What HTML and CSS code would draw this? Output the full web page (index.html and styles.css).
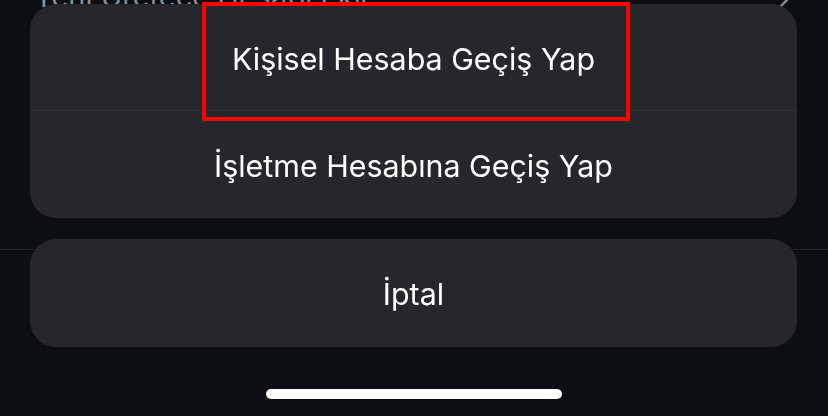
FILE: index.html
```html
<!DOCTYPE html>
<html lang="tr">
<head>
<meta charset="utf-8">
<title>Hesap Değiştir</title>
<link rel="stylesheet" href="styles.css">
</head>
<body>
<div class="backdrop">
  <div class="bg-row">
    <span class="bg-title">Yeni Üretece Hesabı Ekle</span>
    <svg class="bg-chevron" width="14" height="24" viewBox="0 0 14 24"><path d="M2 2 L12 12 L2 22" fill="none" stroke="#8b8e94" stroke-width="2.4" stroke-linecap="round" stroke-linejoin="round"/></svg>
  </div>
  <div class="bg-spacer"></div>
  <div class="bg-line"></div>
</div>

<div class="sheet">
  <div class="group">
    <div class="action first">
      <span>Kişisel Hesaba Geçiş Yap</span>
      <div class="highlight"></div>
    </div>
    <div class="divider"></div>
    <div class="action">
      <span>İşletme Hesabına Geçiş Yap</span>
    </div>
  </div>
  <div class="group cancel">
    <div class="action">
      <span>İptal</span>
    </div>
  </div>
  <div class="home-area">
    <div class="home-indicator"></div>
  </div>
</div>
</body>
</html>
```
FILE: styles.css
```css
* { box-sizing: border-box; }
html, body {
  margin: 0;
  padding: 0;
  background: #0b0e12;
  width: 828px;
  height: 416px;
  overflow: hidden;
  font-family: "Inter", "Noto Sans", "Liberation Sans", sans-serif;
}

.backdrop {
  display: flex;
  flex-direction: column;
}
.bg-row {
  display: flex;
  justify-content: space-between;
  align-items: center;
  height: 20px;
  margin-top: -13px;
  padding: 0 36px 0 34px;
}
.bg-title {
  color: #8b8e94;
  font-size: 29px;
  line-height: 20px;
}
.bg-spacer { height: 242px; }
.bg-line {
  height: 1px;
  background: #1d2025;
}

.sheet {
  position: fixed;
  inset: 0;
  display: flex;
  flex-direction: column;
  padding: 4px 31px 0 30px;
}
.group {
  background: #25272c;
  border-radius: 26px;
  display: flex;
  flex-direction: column;
}
.action {
  position: relative;
  height: 107px;
  display: flex;
  align-items: center;
  justify-content: center;
  color: #ffffff;
  font-size: 30.4px;
  padding-top: 3px;
}
.action.first { height: 106px; }
.divider {
  height: 1px;
  background: #2f3136;
}
.cancel {
  margin-top: 21px;
}
.cancel .action { height: 108px; padding-top: 1px; }
.highlight {
  position: absolute;
  left: 172px;
  top: -2px;
  width: 428px;
  height: 119px;
  border: 4px solid #ff0000;
}
.home-area {
  flex: 1;
  display: flex;
  justify-content: center;
  padding-top: 42px;
}
.home-indicator {
  width: 296px;
  height: 10px;
  border-radius: 5px;
  background: #ffffff;
  margin-left: 1px;
}
```
